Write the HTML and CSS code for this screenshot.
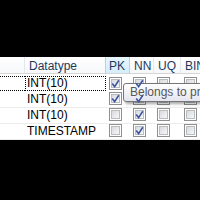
FILE: index.html
```html
<!DOCTYPE html>
<html>
<head>
<meta charset="utf-8">
<link rel="stylesheet" href="styles.css">
</head>
<body>
<div class="screen">
  <div class="blank"></div>
  <div class="grid">
    <div class="hd"></div>
    <div class="hd">Datatype</div>
    <div class="hd hot">PK</div>
    <div class="hd">NN</div>
    <div class="hd">UQ</div>
    <div class="hd last">BIN</div>

    <div class="cell first"><div class="focus f0"></div></div>
    <div class="cell first"><div class="focus f1">INT(10)</div></div>
    <div class="cell first box"><span class="cb on"><svg viewBox="0 0 13 13"><path d="M3.2 6.6 L5.6 9.6 L9.8 3.2"/></svg></span></div>
    <div class="cell first box"><span class="cb on"><svg viewBox="0 0 13 13"><path d="M3.2 6.6 L5.6 9.6 L9.8 3.2"/></svg></span></div>
    <div class="cell first box"><span class="cb"></span></div>
    <div class="cell first box"><span class="cb"></span></div>

    <div class="cell"></div>
    <div class="cell txt">INT(10)</div>
    <div class="cell box"><span class="cb on"><svg viewBox="0 0 13 13"><path d="M3.2 6.6 L5.6 9.6 L9.8 3.2"/></svg></span></div>
    <div class="cell box"><span class="cb on"><svg viewBox="0 0 13 13"><path d="M3.2 6.6 L5.6 9.6 L9.8 3.2"/></svg></span></div>
    <div class="cell box"><span class="cb"></span></div>
    <div class="cell box"><span class="cb"></span></div>

    <div class="cell"></div>
    <div class="cell txt">INT(10)</div>
    <div class="cell box"><span class="cb"></span></div>
    <div class="cell box"><span class="cb on"><svg viewBox="0 0 13 13"><path d="M3.2 6.6 L5.6 9.6 L9.8 3.2"/></svg></span></div>
    <div class="cell box"><span class="cb"></span></div>
    <div class="cell box"><span class="cb"></span></div>

    <div class="cell"></div>
    <div class="cell txt">TIMESTAMP</div>
    <div class="cell box"><span class="cb"></span></div>
    <div class="cell box"><span class="cb on"><svg viewBox="0 0 13 13"><path d="M3.2 6.6 L5.6 9.6 L9.8 3.2"/></svg></span></div>
    <div class="cell box"><span class="cb"></span></div>
    <div class="cell box"><span class="cb"></span></div>

    <div class="tip">Belongs to primary key</div>
  </div>
</div>
</body>
</html>
```
FILE: styles.css
```css
html, body {
  margin: 0;
  padding: 0;
  background: #000;
  width: 200px;
  height: 200px;
  overflow: hidden;
}
.screen {
  width: 200px;
  height: 200px;
  overflow: hidden;
  font-family: "Liberation Sans", Arial, sans-serif;
  font-size: 12px;
}
.blank {
  height: 57px;
}
.grid {
  position: relative;
  display: grid;
  grid-template-columns: 25px 81px 24px 24px 27px 60px;
  width: 240px;
  background: #fff;
}
.hd {
  height: 17px;
  box-sizing: border-box;
  padding: 2px 0 0 4px;
  line-height: 15px;
  color: #1e395b;
  background: linear-gradient(#ffffff, #f6f7f9);
  border-right: 1px solid #e4e7eb;
  border-bottom: 1px solid #d5d5d5;
  margin-bottom: 2px;
  white-space: nowrap;
}
.hd.hot {
  background: linear-gradient(#e6f5fd, #d5edfb);
  border-left: 1px solid #a6d8f5;
  border-right: 1px solid #a6d8f5;
  padding-left: 3px;
  margin-left: -1px;
}
.cell {
  height: 16px;
  box-sizing: border-box;
  border-bottom: 1px solid #ececec;
  line-height: 15px;
  color: #000;
  white-space: nowrap;
}
.cell.txt {
  padding-left: 2px;
}
.cell.first {
  border-bottom-color: #fff;
}
.focus {
  height: 15px;
  box-sizing: border-box;
  border-top: 1px dotted #000;
  border-bottom: 1px dotted #000;
  line-height: 13px;
}
.focus.f1 {
  border-left: 1px dotted #000;
  border-right: 1px dotted #000;
  padding-left: 1px;
}
.cell.box {
  padding-left: 3px;
}
.cb {
  position: relative;
  display: block;
  width: 13px;
  height: 13px;
  box-sizing: border-box;
  border: 1px solid #8e8f8f;
  background: #fff;
}
.first .cb {
  margin-top: 1px;
}
.cb::before {
  content: "";
  position: absolute;
  left: 1px;
  top: 1px;
  right: 1px;
  bottom: 1px;
  border: 1px solid #b9bcc0;
  background: linear-gradient(135deg, #d9dadc, #f7f7f7);
}
.cb svg {
  position: absolute;
  left: -1px;
  top: -1px;
  width: 13px;
  height: 13px;
  z-index: 1;
}
.cb svg path {
  fill: none;
  stroke: #3d55a0;
  stroke-width: 1.6;
}
.tip {
  position: absolute;
  left: 123px;
  top: 26px;
  height: 19px;
  box-sizing: border-box;
  padding: 0 6px;
  line-height: 17px;
  border: 1px solid #767676;
  border-radius: 3px;
  background: linear-gradient(#ffffff, #e4e5f0);
  color: #575757;
  box-shadow: 2px 2px 3px rgba(0, 0, 0, 0.35);
  white-space: nowrap;
}
```
